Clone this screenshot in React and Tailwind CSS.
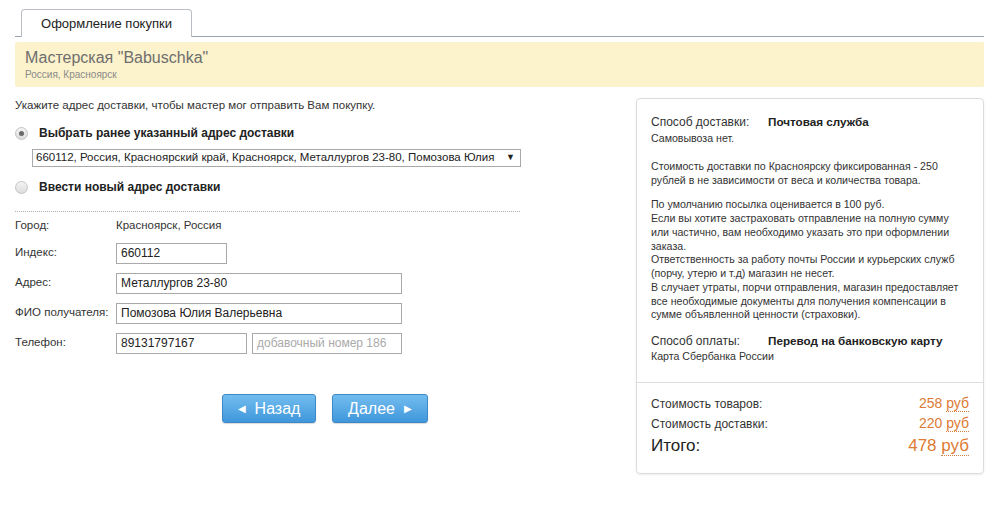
import React from 'react';

const Radio = ({ checked }) => (
  <span className="w-[13px] h-[13px] rounded-full border border-[#c4c4c4] bg-gradient-to-b from-[#f4f4f4] to-[#dcdcdc] flex items-center justify-center shrink-0">
    {checked && <span className="w-[5px] h-[5px] rounded-full bg-[#6a6a6a]" />}
  </span>
);

const Field = ({ label, children }) => (
  <div className="flex items-start h-[30px]">
    <div className="w-[101px] text-[11.5px] text-[#333] pt-[1px]">{label}</div>
    <div className="flex gap-[5px]">{children}</div>
  </div>
);

const Input = ({ value, width, muted }) => (
  <div
    className={`${width} h-[21px] border border-[#a9a9a9] px-[4px] text-[12px] leading-[19px] whitespace-nowrap ${muted ? 'text-[#aaa]' : 'text-[#222]'}`}
  >
    {value}
  </div>
);

const Rub = ({ amount }) => (
  <span>
    {amount} <span className="border-b border-dotted border-[#d08040]">руб</span>
  </span>
);

const infoLines = [
  'По умолчанию посылка оценивается в 100 руб.',
  'Если вы хотите застраховать отправление на полную сумму',
  'или частично, вам необходимо указать это при оформлении',
  'заказа.',
  'Ответственность за работу почты России и курьерских служб',
  '(порчу, утерю и т.д) магазин не несет.',
  'В случает утраты, порчи отправления, магазин предоставляет',
  'все необходимые документы для получения компенсации в',
  'сумме объявленной ценности (страховки).',
];

export default function App() {
  return (
    <div className="w-[1000px] h-[528px] bg-white pl-[15px] pr-[16px] pt-[9px] font-['Liberation_Sans',Arial,sans-serif] text-[#333]">
      {/* tabs */}
      <div className="flex border-b border-[#9aa2ab] pl-[6px]">
        <div className="w-[171px] h-[28px] -mb-px bg-white border border-b-0 border-[#b8bec4] rounded-t-[4px] flex items-center justify-center text-[13px] text-[#222]">
          Оформление покупки
        </div>
      </div>

      {/* shop banner */}
      <div className="mt-[5px] h-[45px] bg-[#fcf2cc] rounded-[2px] pl-[10px] pt-[6px]">
        <div className="text-[16px] leading-[20px] text-[#6e6e6e]">Мастерская "Babuschka"</div>
        <div className="text-[10px] leading-[14px] text-[#8a8a8a]">Россия, Красноярск</div>
      </div>

      <div className="flex mt-[11px]">
        {/* left column */}
        <div className="w-[505px]">
          <div className="text-[11.5px] leading-[14px] text-[#333]">
            Укажите адрес доставки, чтобы мастер мог отправить Вам покупку.
          </div>

          <div className="flex items-center mt-[12px] gap-[11px]">
            <Radio checked />
            <span className="text-[12px] font-bold text-[#222]">Выбрать ранее указанный адрес доставки</span>
          </div>

          <div className="ml-[17px] mt-[7px] w-[489px] h-[18px] border border-[#a9a9a9] flex items-center justify-between pl-[3px] pr-[5px] text-[11.5px] text-[#222] whitespace-nowrap">
            <span>660112, Россия, Красноярский край, Красноярск, Металлургов 23-80, Помозова Юлия</span>
            <span className="text-[9px]">▼</span>
          </div>

          <div className="flex items-center mt-[11px] gap-[11px]">
            <Radio />
            <span className="text-[12px] font-bold text-[#222]">Ввести новый адрес доставки</span>
          </div>

          <div className="mt-[15px] border-t border-dotted border-[#b0b0b0]" />

          <div className="mt-[5px]">
            <div className="flex items-start h-[26px]">
              <div className="w-[101px] text-[11.5px] text-[#333]">Город:</div>
              <div className="text-[11.5px] text-[#333]">Красноярск, Россия</div>
            </div>
            <Field label="Индекс:">
              <Input value="660112" width="w-[111px]" />
            </Field>
            <Field label="Адрес:">
              <Input value="Металлургов 23-80" width="w-[286px]" />
            </Field>
            <Field label="ФИО получателя:">
              <Input value="Помозова Юлия Валерьевна" width="w-[286px]" />
            </Field>
            <Field label="Телефон:">
              <Input value="89131797167" width="w-[131px]" />
              <Input value="добавочный номер 186" width="w-[150px]" muted />
            </Field>
          </div>

          <div className="flex gap-[16px] mt-[31px] ml-[207px]">
            <button className="w-[94px] h-[29px] rounded-[3px] border border-[#3d88c8] bg-gradient-to-b from-[#72bdf0] to-[#3f97da] text-white text-[16px] flex items-center justify-center gap-[9px] shadow-[0_1px_1px_rgba(0,0,0,0.15)]">
              <span className="text-[10px]">◀</span>
              <span>Назад</span>
            </button>
            <button className="w-[96px] h-[29px] rounded-[3px] border border-[#3d88c8] bg-gradient-to-b from-[#72bdf0] to-[#3f97da] text-white text-[16px] flex items-center justify-center gap-[9px] shadow-[0_1px_1px_rgba(0,0,0,0.15)]">
              <span>Далее</span>
              <span className="text-[10px]">▶</span>
            </button>
          </div>
        </div>

        {/* right summary */}
        <div className="ml-auto w-[348px] h-[376px] border border-[#dcdcdc] rounded-[4px] shadow-[0_1px_2px_rgba(0,0,0,0.08)] flex flex-col">
          <div className="px-[14px] pt-[15px] text-[10.6px] leading-[13.75px] text-[#333] h-[283px] whitespace-nowrap">
            <div className="flex text-[12px] leading-[16px]">
              <span className="w-[117px]">Способ доставки:</span>
              <span className="font-bold text-[11.7px] text-[#222]">Почтовая служба</span>
            </div>
            <div className="mt-[2px]">Самовывоза нет.</div>
            <div className="mt-[14px]">
              Стоимость доставки по Красноярску фиксированная - 250
              <br />
              рублей в не зависимости от веса и количества товара.
            </div>
            <div className="mt-[11px]">
              {infoLines.map((line) => (
                <div key={line}>{line}</div>
              ))}
            </div>
            <div className="flex text-[12px] leading-[16px] mt-[11px]">
              <span className="w-[117px]">Способ оплаты:</span>
              <span className="font-bold text-[11.7px] text-[#222]">Перевод на банковскую карту</span>
            </div>
            <div className="mt-[1px]">Карта Сбербанка России</div>
          </div>

          <div className="border-t border-[#dcdcdc] px-[14px] pt-[11px]">
            <div className="flex justify-between items-baseline text-[12px] leading-[18.5px]">
              <span>Стоимость товаров:</span>
              <span className="text-[14px] text-[#dd7a35]"><Rub amount="258" /></span>
            </div>
            <div className="flex justify-between items-baseline text-[12px] leading-[18.5px]">
              <span>Стоимость доставки:</span>
              <span className="text-[14px] text-[#dd7a35]"><Rub amount="220" /></span>
            </div>
            <div className="flex justify-between items-baseline text-[17px] leading-[26px] text-[#222]">
              <span>Итого:</span>
              <span className="text-[17px] text-[#dd7a35]"><Rub amount="478" /></span>
            </div>
          </div>
        </div>
      </div>
    </div>
  );
}
